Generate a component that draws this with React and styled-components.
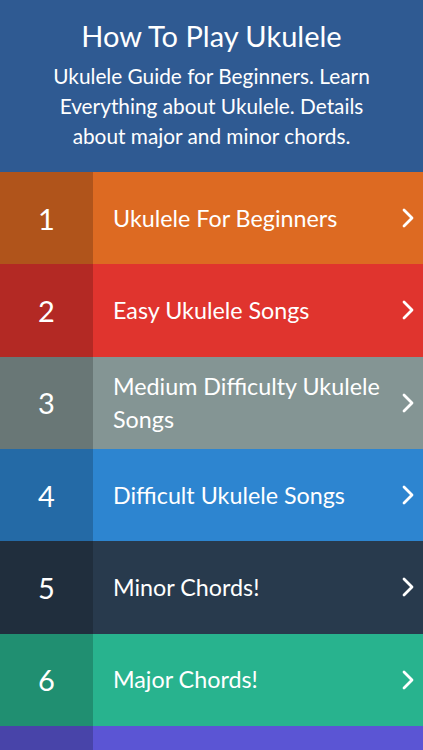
import React from "react";
import styled, { createGlobalStyle } from "styled-components";

const GlobalStyle = createGlobalStyle`
  html, body {
    margin: 0;
    padding: 0;
    background: #5b55d4;
  }
  body {
    font-family: Lato, "Open Sans", sans-serif;
    -webkit-font-smoothing: antialiased;
  }
`;

const Page = styled.div`
  width: 423px;
  height: 750px;
  overflow: hidden;
  display: flex;
  flex-direction: column;
`;

const Header = styled.header`
  height: 172px;
  flex-shrink: 0;
  box-sizing: border-box;
  background: #2f5a92;
  color: #fff;
  text-align: center;
  padding-top: 18px;
`;

const Title = styled.h1`
  margin: 0;
  font-weight: 400;
  font-size: 29px;
  line-height: 36px;
`;

const Subtitle = styled.p`
  margin: 7px auto 0;
  width: 345px;
  font-weight: 400;
  font-size: 20.8px;
  line-height: 30px;
`;

const Row = styled.div`
  height: 92.33px;
  flex-shrink: 0;
  display: flex;
  align-items: center;
  background: ${(p) => p.$color};
  color: #fff;
`;

const Num = styled.div`
  width: 93px;
  height: 100%;
  flex-shrink: 0;
  display: flex;
  align-items: center;
  justify-content: center;
  background: rgba(0, 0, 0, 0.2);
  font-size: 29px;
  font-weight: 400;
`;

const Label = styled.div`
  flex: 1;
  padding-left: 20px;
  padding-right: 10px;
  font-size: 23.3px;
  line-height: 33px;
  font-weight: 400;
`;

const Chevron = styled.svg`
  width: 12px;
  height: 20px;
  margin-right: 9px;
  flex-shrink: 0;
`;

const items = [
  { n: 1, label: "Ukulele For Beginners", color: "#dd6a22" },
  { n: 2, label: "Easy Ukulele Songs", color: "#e0342e" },
  { n: 3, label: "Medium Difficulty Ukulele Songs", color: "#849594" },
  { n: 4, label: "Difficult Ukulele Songs", color: "#2d85d0" },
  { n: 5, label: "Minor Chords!", color: "#283a4d" },
  { n: 6, label: "Major Chords!", color: "#28b38e" },
];

export default function App() {
  return (
    <Page>
      <GlobalStyle />
      <Header>
        <Title>How To Play Ukulele</Title>
        <Subtitle>
          Ukulele Guide for Beginners. Learn Everything about Ukulele. Details
          about major and minor chords.
        </Subtitle>
      </Header>
      {items.map((it) => (
        <Row key={it.n} $color={it.color}>
          <Num>{it.n}</Num>
          <Label>{it.label}</Label>
          <Chevron viewBox="0 0 12 20">
            <path
              d="M2 2 L10 10 L2 18"
              fill="none"
              stroke="#fff"
              strokeWidth="2.8"
              strokeLinecap="round"
              strokeLinejoin="round"
            />
          </Chevron>
        </Row>
      ))}
      {/* next row, only its top edge is on screen */}
      <Row $color="#5b55d4">
        <Num />
      </Row>
    </Page>
  );
}
